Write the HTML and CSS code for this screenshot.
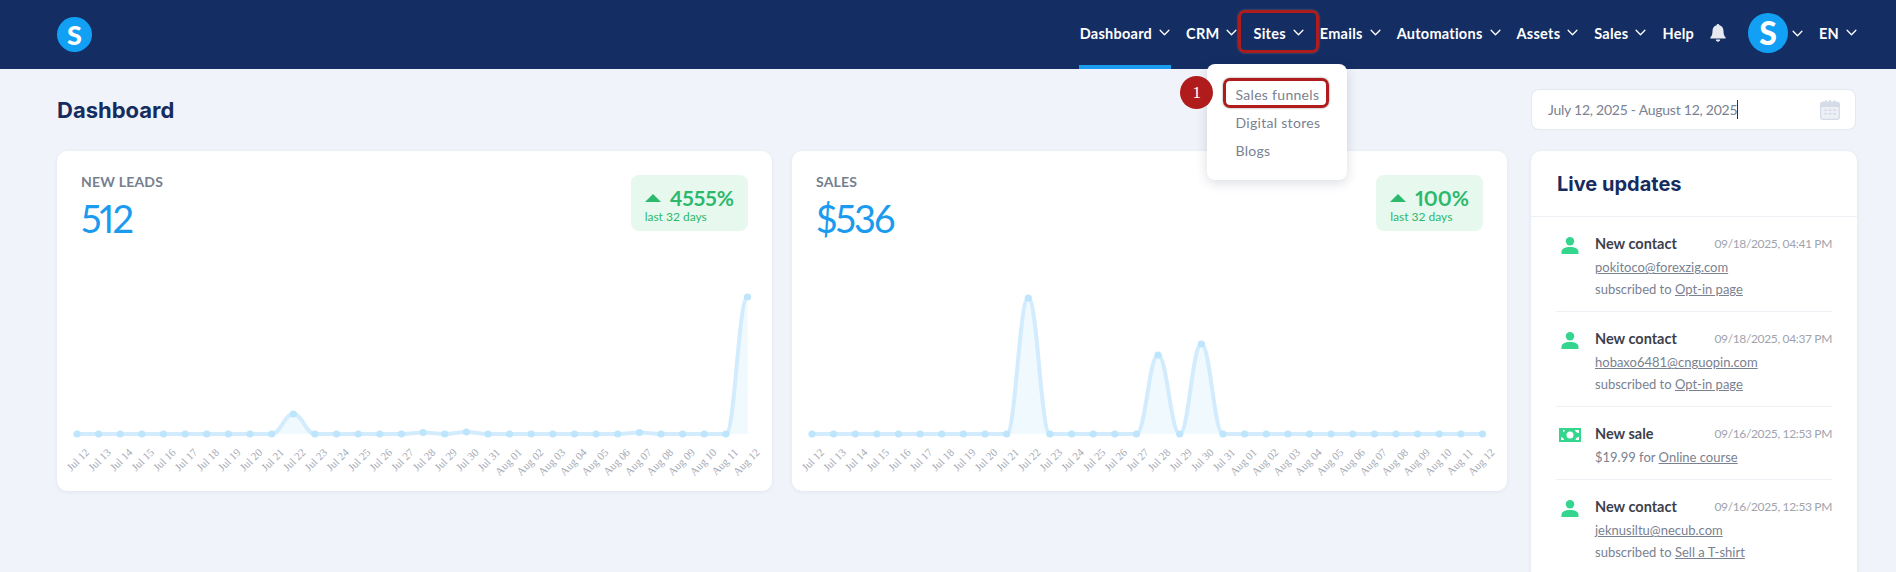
FILE: index.html
```html
<!DOCTYPE html>
<html lang="en">
<head>
<meta charset="utf-8">
<title>Dashboard</title>
<link rel="stylesheet" href="styles.css">
</head>
<body>
<svg class="sprite" aria-hidden="true">
  <symbol id="chev" viewBox="0 0 10 6"><path d="M1 1l4 4 4-4" fill="none" stroke="currentColor" stroke-width="1.2" stroke-linecap="round" stroke-linejoin="round"/></symbol>
  <symbol id="person" viewBox="0 0 18 17"><circle cx="9" cy="4.3" r="4.2" fill="currentColor"/><path d="M0.5 17v-2.2c0-3 3.4-4.8 8.5-4.8s8.5 1.800 8.500 4.800V17z" fill="currentColor"/></symbol>
  <symbol id="money" viewBox="0 0 22 14"><path fill-rule="evenodd" d="M0 0h22v14H0zM2 4v8h3c0-1.500-1.500-3-3-3V4zM6 2c0 1.200-1 2-2 2v-2zM11 3.500a3.500 3.500 0 1 0 0 7 3.500 3.500 0 0 0 0-7zM16 2c0 1.400 1.600 3 4 3V2zM20 9c-2 0-3.500 1.400-3.500 3H20z" fill="currentColor"/></symbol>
</svg>

<header class="topbar">
  <span class="logo">S</span>
  <nav class="nav">
    <a class="nav-item active">Dashboard<svg class="chev"><use href="#chev"/></svg></a>
    <a class="nav-item">CRM<svg class="chev"><use href="#chev"/></svg></a>
    <a class="nav-item nav-sites">Sites<svg class="chev"><use href="#chev"/></svg>
      <div class="menu">
        <span class="menu-link menu-first">Sales funnels<i class="step">1</i></span>
        <span class="menu-link">Digital stores</span>
        <span class="menu-link">Blogs</span>
      </div>
    </a>
    <a class="nav-item">Emails<svg class="chev"><use href="#chev"/></svg></a>
    <a class="nav-item">Automations<svg class="chev"><use href="#chev"/></svg></a>
    <a class="nav-item">Assets<svg class="chev"><use href="#chev"/></svg></a>
    <a class="nav-item">Sales<svg class="chev"><use href="#chev"/></svg></a>
    <a class="nav-item">Help</a>
    <svg class="bell" viewBox="0 0 16 18"><path d="M8 0c.8 0 1.400.6 1.400 1.300C12 1.900 13.500 4 13.500 7c0 3.500.8 5 2 6.200.4.500.2 1.300-.6 1.300H1.100c-.8 0-1-.8-.6-1.300C1.700 12 2.500 10.500 2.500 7c0-3 1.500-5.100 4.100-5.700C6.600.6 7.200 0 8 0zM5.800 15.600h4.400c0 1.300-1 2.200-2.200 2.200s-2.200-.9-2.200-2.200z" fill="currentColor"/></svg>
    <span class="avatar">S</span>
    <svg class="chev chev-avatar"><use href="#chev"/></svg>
    <a class="nav-item nav-lang">EN<svg class="chev"><use href="#chev"/></svg></a>
  </nav>
</header>

<main class="page">
  <div class="page-head">
    <h1 class="page-title">Dashboard</h1>
    <div class="date-input">
      <span class="date-text">July 12, 2025 - August 12, 2025</span>
      <svg class="cal" viewBox="0 0 20 20"><path fill-rule="evenodd" d="M3 1.500h2V0h1.500v1.500h2.500V0h2v1.500h2.500V0H15v1.500h2c1.700 0 3 1.300 3 3V17c0 1.700-1.300 3-3 3H3c-1.700 0-3-1.300-3-3V4.500c0-1.700 1.300-3 3-3zM1.500 7v10c0 .8.700 1.500 1.500 1.500h14c.8 0 1.500-.7 1.500-1.500V7zM4 9.500h3V11H4zM8.500 9.500h3V11h-3zM13 9.500h3V11h-3zM4 13h3v1.500H4zM8.500 13h3v1.500h-3zM13 13h3v1.500h-3z" fill="currentColor"/><path d="M1.500 7h17v10c0 .8-.7 1.500-1.500 1.500H3c-.8 0-1.500-.7-1.500-1.500z" fill="currentColor" opacity=".45"/></svg>
    </div>
  </div>

  <div class="content">
    <div class="charts">
      <section class="card">
        <div class="card-head">
          <div>
            <div class="card-label">NEW LEADS</div>
            <div class="card-value">512</div>
          </div>
          <div class="badge">
            <div class="badge-top"><i class="tri"></i>4555%</div>
            <div class="badge-sub">last 32 days</div>
          </div>
        </div>
        <svg class="chart" data-series="leads" viewBox="0 0 715 222"></svg>
      </section>
      <section class="card">
        <div class="card-head">
          <div>
            <div class="card-label">SALES</div>
            <div class="card-value">$536</div>
          </div>
          <div class="badge">
            <div class="badge-top"><i class="tri"></i>100%</div>
            <div class="badge-sub">last 32 days</div>
          </div>
        </div>
        <svg class="chart" data-series="sales" viewBox="0 0 715 222"></svg>
      </section>
    </div>

    <aside class="live">
      <h2 class="live-title">Live updates</h2>
      <ul class="feed">
        <li class="feed-item">
          <svg class="feed-icon person"><use href="#person"/></svg>
          <div class="feed-body">
            <div class="feed-top"><strong>New contact</strong><time>09/18/2025, 04:41 PM</time></div>
            <div class="feed-line"><a>pokitoco@forexzig.com</a></div>
            <div class="feed-line">subscribed to <a>Opt-in page</a></div>
          </div>
        </li>
        <li class="feed-item">
          <svg class="feed-icon person"><use href="#person"/></svg>
          <div class="feed-body">
            <div class="feed-top"><strong>New contact</strong><time>09/18/2025, 04:37 PM</time></div>
            <div class="feed-line"><a>hobaxo6481@cnguopin.com</a></div>
            <div class="feed-line">subscribed to <a>Opt-in page</a></div>
          </div>
        </li>
        <li class="feed-item">
          <svg class="feed-icon money"><use href="#money"/></svg>
          <div class="feed-body">
            <div class="feed-top"><strong>New sale</strong><time>09/16/2025, 12:53 PM</time></div>
            <div class="feed-line">$19.99 for <a>Online course</a></div>
          </div>
        </li>
        <li class="feed-item">
          <svg class="feed-icon person"><use href="#person"/></svg>
          <div class="feed-body">
            <div class="feed-top"><strong>New contact</strong><time>09/16/2025, 12:53 PM</time></div>
            <div class="feed-line"><a>jeknusiltu@necub.com</a></div>
            <div class="feed-line">subscribed to <a>Sell a T-shirt</a></div>
          </div>
        </li>
      </ul>
    </aside>
  </div>
</main>
<script src="charts.js"></script>
</body>
</html>
```
FILE: styles.css
```css
*, *::before, *::after { box-sizing: border-box; }
html, body { height: 100%; margin: 0; overflow: hidden; }
body { background: #f0f3f9; font-family: "Lato", "Liberation Sans", sans-serif; color: #7a8190; }
.sprite { display: none; }

.topbar { height: 69px; background: #142d63; display: flex; align-items: center; padding: 0 39px 0 57px; }
.logo { width: 35px; height: 35px; border-radius: 50%; background: #12a0f5; color: #fff; font: 900 27px/35px "Lato", sans-serif; text-align: center; }
.nav { margin-left: auto; display: flex; align-items: center; gap: 16px; height: 100%; color: #fff; }
.nav-item { position: relative; display: flex; align-items: center; gap: 7px; height: 100%; font-size: 14.5px; font-weight: 700; letter-spacing: .25px; white-space: nowrap; padding-bottom: 3px; }
.chev { width: 11px; height: 7px; color: #fff; flex: none; margin-top: -2px; }
.nav-item.active::after { content: ""; position: absolute; left: -1px; right: -1px; bottom: 0; height: 4px; background: #1a9df0; }
.nav-sites::before { content: ""; position: absolute; left: -15px; right: -15px; top: 10px; bottom: 16px; border: 3px solid #b01c1c; border-radius: 7px; box-shadow: 0 0 2px #777; }
.bell { width: 16px; height: 18px; color: #e6e9f0; margin-bottom: 3px; }
.avatar { width: 40px; height: 40px; border-radius: 50%; background: #12a0f5; color: #fff; font: 900 32px/40px "Lato", sans-serif; text-align: center; margin-left: 6px; margin-right: -12px; margin-bottom: 3px; }
.chev-avatar { margin-bottom: 1px; }
.nav-lang { margin-left: 0; }

.menu { position: absolute; left: -46px; top: 64px; width: 140px; height: 116px; background: #fff; border-radius: 8px; box-shadow: 0 3px 12px rgba(30,45,80,.16); padding: 21px 0 0 28px; z-index: 3; font-weight: 400; font-size: 14px; letter-spacing: .3px; color: #7a8190; display: flex; flex-direction: column; gap: 8px; }
.menu-link { position: relative; display: block; height: 20px; line-height: 20px; }
.menu-first::after { content: ""; position: absolute; left: -12px; top: -7px; width: 106px; height: 30px; border: 3px solid #b01c1c; border-radius: 7px; box-shadow: 0 0 2px #777; }
.step { position: absolute; left: -55px; top: -9px; width: 33px; height: 33px; border-radius: 50%; background: #b01c1c; color: #fff; font: 400 17px/33px "Liberation Serif", serif; text-align: center; }

.page { padding: 20px 39px 0 57px; }
.page-head { display: flex; justify-content: space-between; align-items: center; height: 41px; margin-bottom: 21px; }
.page-title { margin: 0; font: 700 22px/1 "Inter", sans-serif; color: #152c60; }
.date-input { width: 325px; height: 41px; margin-right: 1px; background: #fff; border: 1px solid #e4e8f0; border-radius: 8px; display: flex; align-items: center; justify-content: space-between; padding: 0 15px 0 16px; }
.date-text { font-size: 14px; letter-spacing: -.25px; color: #7a8190; border-right: 1px solid #2a3350; line-height: 19px; }
.cal { width: 20px; height: 20px; color: #d5dbe7; }

.content { display: flex; gap: 24px; align-items: flex-start; }
.charts { flex: 1; display: grid; grid-template-columns: 1fr 1fr; gap: 20px; }
.card { background: #fff; border-radius: 10px; box-shadow: 0 1px 4px rgba(30,45,80,.07); height: 340px; display: flex; flex-direction: column; }
.card-head { display: flex; justify-content: space-between; align-items: flex-start; padding: 23px 24px 0; height: 118px; }
.card-label { font-size: 14px; font-weight: 700; letter-spacing: .2px; line-height: 16px; color: #767f8e; }
.card-value { font-size: 38px; line-height: 46px; color: #1a9bf0; margin-top: 5px; font-variant-numeric: proportional-nums; letter-spacing: -2px; }
.badge { background: #e7f8ee; border-radius: 8px; padding: 11px 14px 0; height: 56px; margin-top: 1px; color: #2bb96c; }
.badge-top { display: flex; align-items: center; gap: 9px; font-size: 21px; font-weight: 700; line-height: 24px; font-variant-numeric: proportional-nums; }
.tri { width: 0; height: 0; border-left: 8px solid transparent; border-right: 8px solid transparent; border-bottom: 8px solid #2bb96c; }
.badge-sub { font-size: 12px; line-height: 14px; }
.chart { display: block; width: 100%; height: 222px; }
.chart-line { fill: none; stroke: #d3ecfd; stroke-width: 4; }
.chart-area { fill: #f0f9fe; }
.chart-dot { fill: #bde5fc; }
.chart-label { font: 11px "Liberation Serif", serif; fill: #a4a9b3; }

.live { width: 326px; flex: none; height: 600px; background: #fff; border-radius: 10px; box-shadow: 0 1px 4px rgba(30,45,80,.07); }
.live-title { margin: 0; height: 66px; padding: 21px 26px 0; border-bottom: 1px solid #edf0f5; font: 700 20px/24px "Inter", sans-serif; color: #152c60; }
.feed { list-style: none; margin: 0; padding: 0 25px; }
.feed-item { display: flex; padding: 16px 0 11px; border-bottom: 1px solid #edf0f5; }
.feed-icon { flex: none; margin-top: 4px; color: #34d68e; }
.person { width: 18px; height: 17px; margin-left: 5px; margin-right: 16px; }
.money { width: 22px; height: 14px; margin-left: 3px; margin-right: 14px; margin-top: 5px; }
.feed-body { flex: 1; font-size: 13px; color: #7a8190; }
.feed-top { display: flex; justify-content: space-between; align-items: center; height: 20px; margin-bottom: 3px; }
.feed-top strong { font-size: 14.5px; font-weight: 700; color: #3d3f4c; }
.feed-top time { font-size: 12px; letter-spacing: -.35px; color: #a0a4ad; }
.feed-line { line-height: 22px; white-space: nowrap; }
.feed-line a { text-decoration: underline; }
```
FILE: charts.js
```js
var labels = [];
var i;
for (i = 12; i <= 31; i++) labels.push("Jul " + i);
for (i = 1; i <= 12; i++) labels.push("Aug " + (i < 10 ? "0" + i : i));

// Heights in pixels above the baseline, by day index.
var series = {
  leads: { 10: 20, 16: 1.5, 18: 2, 26: 1.5, 31: 137 },
  sales: { 10: 136, 16: 79, 18: 90 }
};

var NS = "http://www.w3.org/2000/svg";
var X0 = 20, STEP = 21.63, BASE = 165;

function el(name, attrs, parent) {
  var node = document.createElementNS(NS, name);
  for (var key in attrs) node.setAttribute(key, attrs[key]);
  parent.appendChild(node);
  return node;
}

document.querySelectorAll(".chart").forEach(function (svg) {
  var data = series[svg.dataset.series];
  var pts = labels.map(function (_, n) {
    return [X0 + n * STEP, BASE - (data[n] || 0)];
  });
  var d = "M" + pts[0][0] + " " + pts[0][1];
  for (var n = 1; n < pts.length; n++) {
    var a = pts[n - 1], b = pts[n], c = STEP * 0.42;
    d += "C" + (a[0] + c) + " " + a[1] + " " + (b[0] - c) + " " + b[1] + " " + b[0] + " " + b[1];
  }
  var last = pts[pts.length - 1];
  el("path", { d: d + "L" + last[0] + " " + BASE + "L" + X0 + " " + BASE + "Z", "class": "chart-area" }, svg);
  el("path", { d: d, "class": "chart-line" }, svg);
  pts.forEach(function (p, n) {
    el("circle", { cx: p[0], cy: p[1], r: 3.6, "class": "chart-dot" }, svg);
    var x = p[0] + 13, y = BASE + 19;
    var t = el("text", { x: x, y: y, "text-anchor": "end", transform: "rotate(-45 " + x + " " + y + ")", "class": "chart-label" }, svg);
    t.textContent = labels[n];
  });
});
```
